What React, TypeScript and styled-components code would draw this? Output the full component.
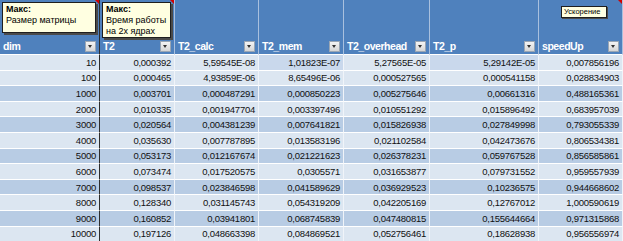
import React from 'react';
import styled, { createGlobalStyle } from 'styled-components';

const GlobalStyle = createGlobalStyle`
	body {
		margin: 0;
		background: #ffffff;
		font-family: 'Liberation Sans', Arial, sans-serif;
	}
`;

type Column = { name: string; width: number; note?: string[]; small?: boolean };

const columns: Column[] = [
	{ name: 'dim', width: 100, note: ['Макс:', 'Размер матрицы'] },
	{ name: 'T2', width: 75, note: ['Макс:', 'Время работы', 'на 2х ядрах'] },
	{ name: 'T2_calc', width: 84 },
	{ name: 'T2_mem', width: 85 },
	{ name: 'T2_overhead', width: 86 },
	{ name: 'T2_p', width: 109 },
	{ name: 'speedUp', width: 84, note: ['Ускорение'], small: true },
];

const rows = [
	['10', '0,000392', '5,59545E-08', '1,01823E-07', '5,27565E-05', '5,29142E-05', '0,007856196'],
	['100', '0,000465', '4,93859E-06', '8,65496E-06', '0,000527565', '0,000541158', '0,028834903'],
	['1000', '0,003701', '0,000487291', '0,000850223', '0,005275646', '0,00661316', '0,488165361'],
	['2000', '0,010335', '0,001947704', '0,003397496', '0,010551292', '0,015896492', '0,683957039'],
	['3000', '0,020564', '0,004381239', '0,007641821', '0,015826938', '0,027849998', '0,793055339'],
	['4000', '0,035630', '0,007787895', '0,013583196', '0,021102584', '0,042473676', '0,806534381'],
	['5000', '0,053173', '0,012167674', '0,021221623', '0,026378231', '0,059767528', '0,856585861'],
	['6000', '0,073474', '0,017520575', '0,0305571', '0,031653877', '0,079731552', '0,959557939'],
	['7000', '0,098537', '0,023846598', '0,041589629', '0,036929523', '0,10236575', '0,944668602'],
	['8000', '0,128340', '0,031145743', '0,054319209', '0,042205169', '0,12767012', '1,000590619'],
	['9000', '0,160852', '0,03941801', '0,068745839', '0,047480815', '0,155644664', '0,971315868'],
	['10000', '0,197126', '0,048663398', '0,084869521', '0,052756461', '0,18628938', '0,956556974'],
];

const App = () => {
	return (
		<>
			<GlobalStyle />
			<SheetStyle>
				{columns.map((col, i) => (
					<HeaderCellStyle key={col.name} $first={i === 0}>
						{col.note && <RedMarkStyle />}
						{col.note && !col.small && (
							<CommentStyle $tall={col.note.length > 2}>
								<b>{col.note[0]}</b>
								{col.note.slice(1).map((line) => (
									<p key={line}>{line}</p>
								))}
							</CommentStyle>
						)}
						{col.note && col.small && <SmallCommentStyle>{col.note[0]}</SmallCommentStyle>}
						<span>{col.name}</span>
						<DropButtonStyle />
					</HeaderCellStyle>
				))}
				{rows.map((row, r) =>
					row.map((value, c) => (
						<DataCellStyle
							key={r + '-' + c}
							$dark={r > 0 && r % 2 === 0}
							$mid={r === 0 && (c === 3 || c === 5)}
							$first={c === 0}
						>
							{value}
						</DataCellStyle>
					))
				)}
			</SheetStyle>
		</>
	);
};

export default App;

const SheetStyle = styled.div`
	display: grid;
	grid-template-columns: ${columns.map((c) => c.width + 'px').join(' ')};
	grid-template-rows: 55px repeat(12, 15.6px);
	width: 623px;
	height: 241px;
	overflow: hidden;
`;

const HeaderCellStyle = styled.div<{ $first?: boolean }>`
	position: relative;
	box-sizing: border-box;
	background: #4f81bd;
	border-right: 1px solid ${(p) => (p.$first ? '#2d2d2d' : '#a9c0de')};
	border-bottom: 1px solid #ffffff;

	display: flex;
	align-items: flex-end;
	justify-content: space-between;
	padding: 0 3px 2px 3px;

	span {
		color: #ffffff;
		font-weight: 700;
		font-size: 10.5px;
		letter-spacing: -0.45px;
		line-height: 12px;
	}
`;

const DropButtonStyle = styled.div`
	position: relative;
	width: 11px;
	height: 11px;
	box-sizing: border-box;
	background: linear-gradient(#f4f4f4, #d6d6d6);
	border: 1px solid #9aa6b4;
	flex-shrink: 0;

	&::after {
		content: '';
		position: absolute;
		left: 2px;
		top: 3px;
		border-left: 2.5px solid transparent;
		border-right: 2.5px solid transparent;
		border-top: 3px solid #333333;
	}
`;

const RedMarkStyle = styled.div`
	position: absolute;
	top: 0;
	right: 0;
	z-index: 2;
	border-left: 4px solid transparent;
	border-top: 4px solid #d10000;
`;

const CommentStyle = styled.div<{ $tall?: boolean }>`
	position: absolute;
	top: 2px;
	left: 2px;
	right: 3px;
	height: ${(p) => (p.$tall ? 36 : 31)}px;
	z-index: 1;
	box-sizing: border-box;
	background: #ffffe1;
	border: 1px solid #1e1e1e;
	box-shadow: 2px 2px 0 #4a4a4a;
	padding: 1px 3px;

	font-size: 9px;
	line-height: 11px;
	color: #000000;

	b {
		display: block;
		font-weight: 700;
	}

	p {
		margin: 0;
	}
`;

const SmallCommentStyle = styled.div`
	position: absolute;
	top: 6px;
	right: 15px;
	z-index: 1;
	width: 46px;
	height: 12px;
	box-sizing: border-box;
	background: #ffffe1;
	border: 1px solid #1e1e1e;
	box-shadow: 1px 1px 0 #4a4a4a;
	padding-left: 2px;

	font-size: 7.5px;
	line-height: 10px;
	color: #000000;
`;

const DataCellStyle = styled.div<{ $dark?: boolean; $mid?: boolean; $first?: boolean }>`
	box-sizing: border-box;
	background: ${(p) => (p.$dark ? '#b8cce4' : p.$mid ? '#c9d8ec' : '#dce6f1')};
	border-bottom: 1px solid #ffffff;
	border-right: 1px solid ${(p) => (p.$first ? '#2d2d2d' : '#f0f4f9')};

	display: flex;
	align-items: center;
	justify-content: flex-end;
	padding-right: 3px;

	color: #111111;
	font-size: 9.5px;
	letter-spacing: -0.25px;
	white-space: nowrap;
`;
